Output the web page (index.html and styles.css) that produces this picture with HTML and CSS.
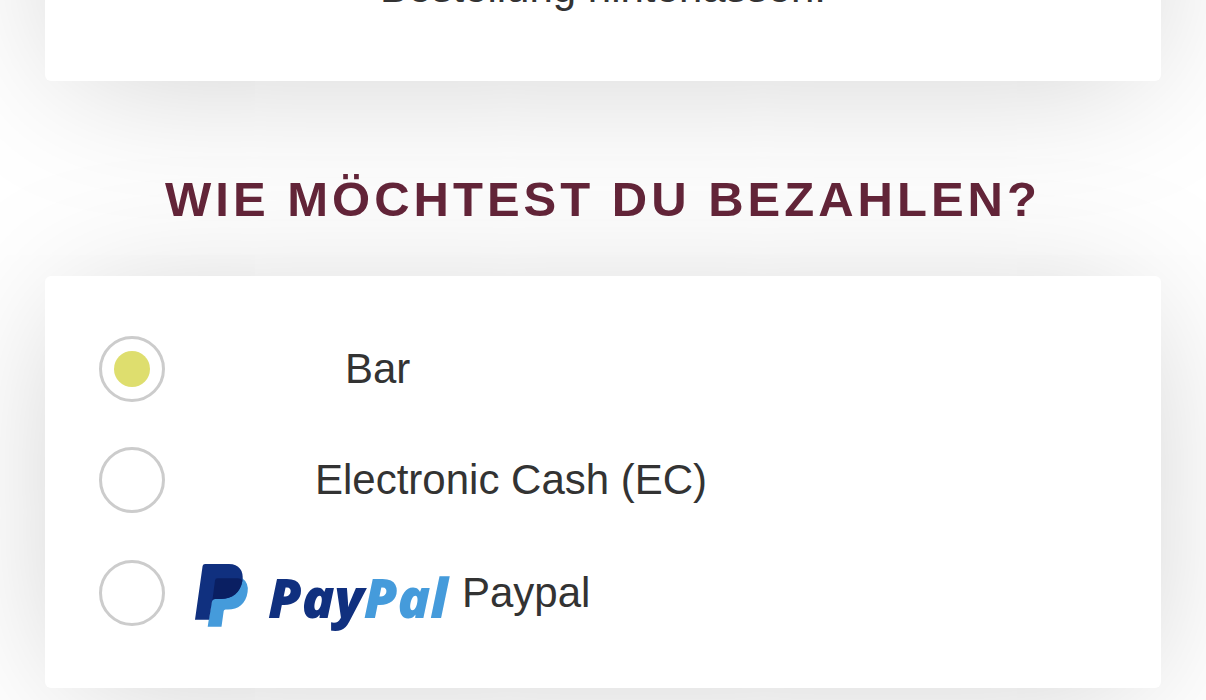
FILE: index.html
```html
<!DOCTYPE html>
<html lang="de">
<head>
<meta charset="utf-8">
<title>Bezahlung</title>
<link rel="stylesheet" href="styles.css">
</head>
<body>
<main class="checkout">
  <section class="card card-note">
    <p class="note">Bestellung hinterlassen.</p>
  </section>
  <h2 class="heading" id="pay-heading">Wie möchtest du bezahlen?</h2>
  <form class="card card-payment" aria-labelledby="pay-heading">
    <label class="option">
      <input class="radio" type="radio" name="payment" value="bar" checked>
      <span class="logo-slot logo-slot-wide"></span>
      <span class="option-name">Bar</span>
    </label>
    <label class="option">
      <input class="radio" type="radio" name="payment" value="ec">
      <span class="logo-slot"></span>
      <span class="option-name">Electronic Cash (EC)</span>
    </label>
    <label class="option">
      <input class="radio" type="radio" name="payment" value="paypal">
      <svg class="paypal" viewBox="0 0 255 70" aria-hidden="true">
        <path fill="#459bdb" d="M20 20H47Q54 25 52.600 34C51 46 43 51.500 33 51.500H30.500Q29 51.500 28.700 53L26.500 68.700H12.700L17 40Z"/>
        <path fill="#10307f" d="M10 6H34C44 6 49 13 47.500 22.500C45.500 35 37 41 26 41H20Q17.500 41 17 43.500L14 61.700H0L7.600 8Q8 6 10 6Z"/>
        <path fill="#0a1f62" d="M22.500 20.300H43Q45.500 20.300 47.400 22.600C45.500 35 37 41 26 41H20Q18 41 17.400 42.300L20 22.500Q20.300 20.300 22.500 20.300Z"/>
        <text class="wordmark" x="73" y="60"><tspan fill="#10307f">Pay</tspan><tspan fill="#459bdb">Pal</tspan></text>
      </svg>
      <span class="option-name">Paypal</span>
    </label>
  </form>
</main>
</body>
</html>
```
FILE: styles.css
```css
* {
  box-sizing: border-box;
}

body {
  margin: 0;
  background: #fff;
  color: #333;
  font-family: "Liberation Sans", Arial, sans-serif;
  font-size: 42px;
  line-height: 60px;
  overflow-x: hidden;
}

.checkout {
  margin: -400px 45px 12px;
}

.card {
  position: relative;
  background: #fff;
  border-radius: 6px;
  box-shadow: 0 10px 150px -20px rgba(0, 0, 0, 0.21);
}

.card-note {
  padding: 358px 54px 63px;
  text-align: center;
}

.note {
  margin: 0;
}

.heading {
  position: relative;
  z-index: 1;
  margin: 88px 0 47px;
  color: #622438;
  font-size: 49px;
  font-weight: 700;
  letter-spacing: 4px;
  text-align: center;
  text-transform: uppercase;
}

.card-payment {
  display: flex;
  flex-direction: column;
  gap: 45px;
  padding: 60px 54px;
}

.option {
  display: flex;
  align-items: center;
}

.radio {
  appearance: none;
  flex: none;
  display: grid;
  place-items: center;
  width: 66px;
  height: 66px;
  margin: 0 30px 0 0;
  border: 3px solid #ccc;
  border-radius: 50%;
  background: #fff;
}

.radio:checked::before {
  content: "";
  width: 36px;
  height: 36px;
  border-radius: 50%;
  background: #dede6e;
}

.logo-slot {
  width: 108px;
}

.logo-slot-wide {
  width: 138px;
}

.option-name {
  margin-left: 12px;
}

.paypal {
  flex: none;
  width: 255px;
  height: 70px;
  overflow: visible;
}

.wordmark {
  font-family: "Open Sans", sans-serif;
  font-size: 54px;
  font-style: italic;
  font-weight: 800;
}
```
